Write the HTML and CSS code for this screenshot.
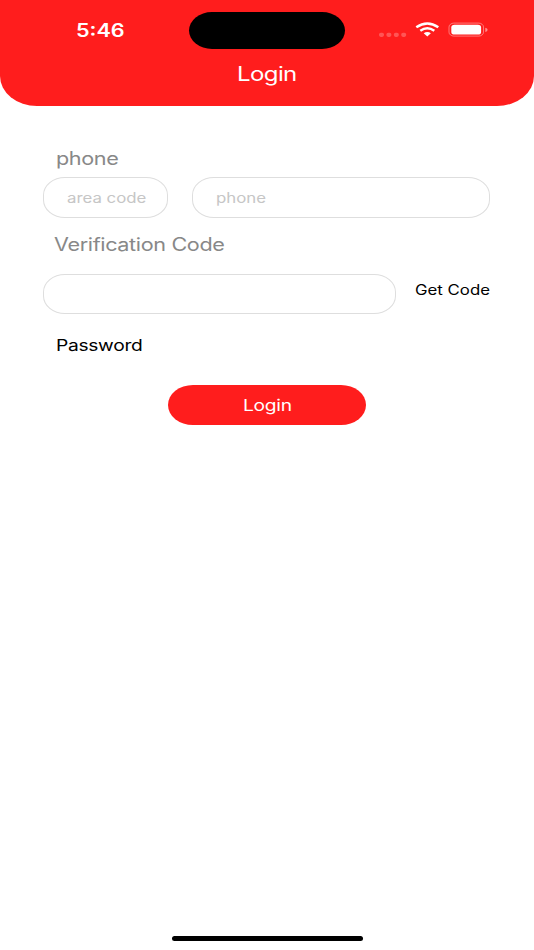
FILE: index.html
```html
<!DOCTYPE html>
<html lang="en">
<head>
<meta charset="utf-8">
<title>Login</title>
<link rel="stylesheet" href="styles.css">
</head>
<body>
<header class="header">
  <div class="status">
    <div class="clock"><span class="wide">5:46</span></div>
    <div class="island"></div>
    <svg class="indicators" width="112" height="20" viewBox="0 0 112 20">
      <g fill="#fff" fill-opacity=".25">
        <rect x="1" y="11.7" width="5" height="4.2" rx="1.8"/>
        <rect x="8.4" y="11.7" width="5" height="4.2" rx="1.8"/>
        <rect x="15.8" y="11.7" width="5" height="4.2" rx="1.8"/>
        <rect x="23.2" y="11.7" width="5" height="4.2" rx="1.8"/>
      </g>
      <g fill="none" stroke="#fff" stroke-width="2.5">
        <path d="M38.3 6.2Q49.3-1.3 60.3 6.2"/>
        <path d="M42.3 9.8Q49.3 4.9 56.3 9.8"/>
      </g>
      <path d="M45.7 12.2Q49.3 9.7 52.9 12.2L49.3 15.5Z" fill="#fff"/>
      <rect x="71" y="2.1" width="34.5" height="13" rx="4.8" ry="4" fill="none" stroke="#fff" stroke-opacity=".4"/>
      <rect x="73.3" y="3.8" width="29.8" height="9.8" rx="3.2" ry="2.6" fill="#fff"/>
      <path d="M107.3 6.7Q109.6 7.1 109.6 8.8T107.3 10.9Z" fill="#fff" fill-opacity=".5"/>
    </svg>
  </div>
  <h1 class="title"><span class="wide">Login</span></h1>
</header>
<main class="form">
  <label class="label phone-label"><span class="wide">phone</span></label>
  <div class="phone-row">
    <div class="field"><span class="wide">area code</span></div>
    <div class="field"><span class="wide">phone</span></div>
  </div>
  <label class="label code-label"><span class="wide">Verification Code</span></label>
  <div class="code-row">
    <div class="field code-field"></div>
    <div class="get-code"><span class="wide">Get Code</span></div>
  </div>
  <div class="password"><span class="wide">Password</span></div>
  <div class="submit"><span class="wide">Login</span></div>
</main>
<div class="home-bar"></div>
</body>
</html>
```
FILE: styles.css
```css
* { box-sizing: border-box; }
body {
  margin: 0;
  height: 950px;
  display: flex;
  flex-direction: column;
  background: #fff;
  color: #000;
  font-family: Inter, "Liberation Sans", sans-serif;
  overflow: hidden;
}
.wide {
  display: inline-block;
  white-space: nowrap;
  transform: scaleX(1.2);
  transform-origin: left center;
}
.header {
  height: 106px;
  background: #ff1d1d;
  color: #fff;
  border-radius: 0 0 37px 37px / 0 0 30px 30px;
}
.status {
  display: grid;
  grid-template-columns: 189px 156px 1fr;
  padding-top: 12px;
  height: 49px;
}
.clock {
  padding-left: 76px;
  font-size: 18px;
  font-weight: 600;
  line-height: 37px;
}
.island {
  height: 37px;
  background: #000;
  border-radius: 23px / 18.5px;
}
.indicators { margin: 9px 0 0 33px; }
.title {
  margin: 0;
  font-size: 20px;
  font-weight: 400;
  letter-spacing: -0.5px;
  line-height: 51px;
  text-align: center;
}
.title .wide, .submit .wide { transform-origin: center; }
.form {
  display: flex;
  flex-direction: column;
  padding: 41px 43px 0;
}
.label {
  color: #888;
  font-size: 18px;
  letter-spacing: -0.3px;
  line-height: 24px;
}
.phone-label { padding-left: 13px; }
.phone-row {
  display: grid;
  grid-template-columns: 125px 298px;
  column-gap: 24px;
  margin-top: 6px;
}
.field {
  height: 41px;
  padding-left: 23px;
  border: 1px solid #dedede;
  border-radius: 22px / 18px;
  color: #c6c6c6;
  font-size: 14px;
  line-height: 39px;
}
.code-field { height: 40px; }
.code-label { padding-left: 11px; margin-top: 15px; }
.code-row {
  display: grid;
  grid-template-columns: 353px 1fr;
  column-gap: 18.5px;
  margin-top: 17px;
}
.get-code { font-size: 14px; line-height: 32px; }
.password {
  margin-top: 19px;
  padding-left: 13px;
  font-size: 16px;
  letter-spacing: -0.25px;
  line-height: 24px;
}
.submit {
  align-self: center;
  width: 198px;
  height: 40px;
  margin-top: 28px;
  border-radius: 25px / 20px;
  background: #ff1d1d;
  color: #fff;
  font-size: 16px;
  letter-spacing: -0.2px;
  line-height: 40px;
  text-align: center;
}
.home-bar {
  align-self: center;
  width: 191px;
  height: 5px;
  margin: auto 0 9px;
  border-radius: 3px;
  background: #000;
}
```
